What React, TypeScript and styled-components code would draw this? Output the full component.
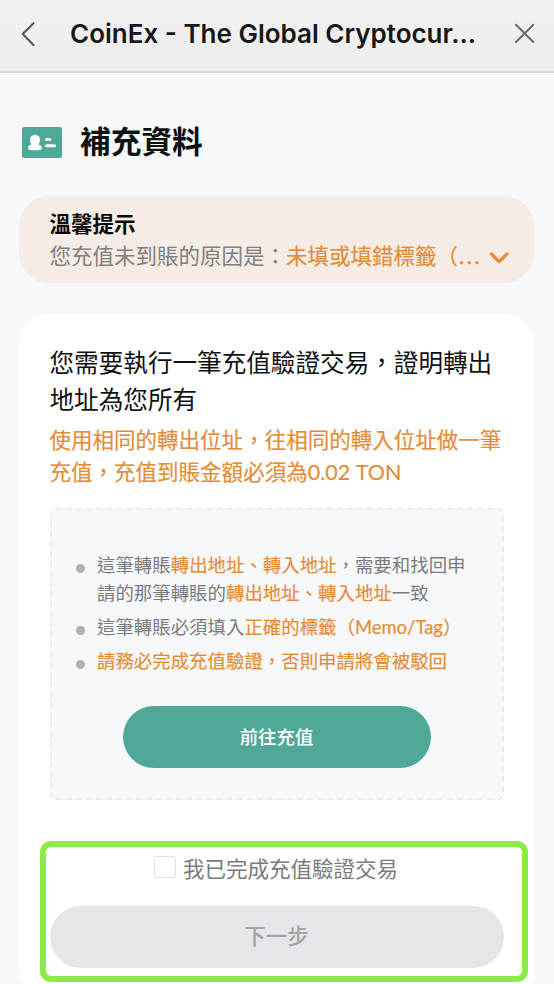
import React from "react";
import styled, { createGlobalStyle } from "styled-components";

const GlobalStyle = createGlobalStyle`
  * { box-sizing: border-box; }
  html, body { margin: 0; padding: 0; height: 984px; overflow: hidden; }
  body {
    background: #f7f8fa;
    font-family: Lato, "Noto Sans CJK TC", sans-serif;
    color: #0f1012;
  }
  h1, h2, p, ul { margin: 0; padding: 0; font-weight: 400; }
  button { border: 0; padding: 0; background: none; font-family: inherit; }
`;

const Page = styled.div`
  width: 554px;
  height: 984px;
  overflow: hidden;
  display: flex;
  flex-direction: column;
`;

const TopBar = styled.header`
  flex: none;
  height: 73px;
  padding: 0 17px 4px 19px;
  display: flex;
  align-items: center;
  background: linear-gradient(#f1f1f1, #ededec);
  border-bottom: 2px solid #d4d7d6;
`;

const BarButton = styled.button`
  display: flex;
  width: 24px;
  height: 26px;
  flex: none;
`;

const BarTitle = styled.h1`
  flex: 1;
  margin-left: 27px;
  font: 600 26px/34px Inter, sans-serif;
  color: #161718;
  white-space: nowrap;
`;

const Heading = styled.div`
  flex: none;
  display: flex;
  align-items: center;
  height: 44px;
  margin: 47px 0 0 22px;
  gap: 18px;
`;

const HeadingText = styled.h2`
  font-size: 30.7px;
  line-height: 44px;
  font-weight: 700;
`;

const Notice = styled.section`
  flex: none;
  height: 87px;
  margin: 32px 20px 0 19px;
  padding: 12px 24px 0 30.5px;
  border-radius: 30px;
  background: #f5ece5;
`;

const NoticeTitle = styled.p`
  font-size: 21.5px;
  line-height: 32px;
  font-weight: 700;
  color: #080808;
`;

const NoticeRow = styled.div`
  display: flex;
  align-items: center;
  font-size: 21.5px;
  line-height: 32px;
  white-space: nowrap;
  color: #808080;
`;

const Accent = styled.span`
  color: #e48d38;
  -webkit-text-stroke: 0.2px #e48d38;
`;

const Ellipsis = styled.span`
  margin-left: 1px;
  letter-spacing: 2.6px;
  -webkit-text-stroke: 0.5px #e48d38;
`;

const Chevron = styled.svg`
  flex: none;
  margin: 4px 0 0 auto;
`;

const Card = styled.main`
  flex: none;
  height: 686px;
  margin: 31px 20px 0 19px;
  padding: 31px 30px 0 30.5px;
  border-radius: 30px;
  background: #fff;
`;

const Lead = styled.p`
  font-size: 24.6px;
  line-height: 36.8px;
  white-space: nowrap;
`;

const Requirement = styled.p`
  margin-top: 5px;
  font-size: 21.53px;
  line-height: 32.3px;
  color: #e48d38;
  -webkit-text-stroke: 0.2px #e48d38;
  white-space: nowrap;
`;

const Panel = styled.section`
  width: 454px;
  height: 292px;
  margin-top: 20px;
  padding-top: 42px;
  border: 2px dashed #ececed;
  border-radius: 6px;
  background: #f7f8fa;
  display: flex;
  flex-direction: column;
  align-items: center;
`;

const Rules = styled.ul`
  align-self: stretch;
  list-style: none;
  display: flex;
  flex-direction: column;
  gap: 6px;
  padding-left: 24px;
`;

const Rule = styled.li`
  display: flex;
  gap: 12.5px;
  font-size: 18.43px;
  line-height: 27.8px;
  color: #7a7b7d;
  white-space: nowrap;

  &::before {
    content: "";
    flex: none;
    width: 9px;
    height: 9px;
    margin-top: 12px;
    border-radius: 50%;
    background: #afb0b2;
  }
`;

const DepositButton = styled.button`
  width: 308px;
  height: 62px;
  margin-top: 31px;
  padding-bottom: 2px;
  border-radius: 31px;
  background: #50a998;
  color: #fff;
  font-size: 18.43px;
  font-weight: 500;
`;

const Highlight = styled.section`
  width: 488px;
  height: 141px;
  margin: 41px 0 0 -9.5px;
  padding: 4px 3.5px;
  border: 6px solid #8beb48;
  border-radius: 11px;
`;

const Confirm = styled.label`
  display: flex;
  align-items: center;
  height: 32px;
  padding-left: 104.5px;
  gap: 7px;
  font-size: 21.5px;
  color: #7b7b7b;
  white-space: nowrap;
`;

const CheckBox = styled.input`
  appearance: none;
  width: 22px;
  height: 22px;
  margin: 0;
  border: 1.5px solid #e0e0e0;
  border-radius: 3px;
  background: #fff;
`;

const NextButton = styled.button`
  display: block;
  width: 454px;
  height: 62px;
  margin-top: 23px;
  padding-bottom: 5px;
  border-radius: 31px;
  background: #e5e6ea;
  color: #a2a3a7;
  font-size: 21.5px;
  font-weight: 500;
`;

export default function App() {
  return (
    <>
      <GlobalStyle />
      <Page>
        <TopBar>
          <BarButton aria-label="返回">
            <svg width="24" height="26" fill="none" stroke="#555659" strokeWidth="2.1" strokeLinecap="round" strokeLinejoin="round">
              <path d="M14.5 2.2 3.7 13l10.8 11" />
            </svg>
          </BarButton>
          <BarTitle>CoinEx - The Global Cryptocur...</BarTitle>
          <BarButton aria-label="關閉">
            <svg width="24" height="26" fill="none" stroke="#6b6b74" strokeWidth="2" strokeLinecap="round">
              <path d="m3 3.700 17.300 17.300M20.300 3.700l-17.300 17.300" />
            </svg>
          </BarButton>
        </TopBar>

        <Heading>
          <svg width="40" height="31">
            <rect width="40" height="31" rx="2" fill="#50a998" />
            <g fill="#fff">
              <ellipse cx="13" cy="13.3" rx="5" ry="5.6" />
              <path d="M10.5 16.5h5c.2 1.2 4.3 1.4 4.3 4.2 0 1.700-1.500 2.500-3.200 2.500H9.400c-1.700 0-3.200-.8-3.200-2.500 0-2.800 4.100-3 4.300-4.200Z" />
              <rect x="23" y="11" width="6.300" height="3" rx="1.500" />
              <rect x="23" y="17.200" width="11" height="3" rx="1.500" />
            </g>
          </svg>
          <HeadingText>補充資料</HeadingText>
        </Heading>

        <Notice>
          <NoticeTitle>溫馨提示</NoticeTitle>
          <NoticeRow>
            您充值未到賬的原因是：
            <Accent>
              未填或填錯標籤（<Ellipsis>...</Ellipsis>
            </Accent>
            <Chevron width="22" height="16" fill="none" stroke="#e48d38" strokeWidth="3.300" strokeLinecap="round" strokeLinejoin="round">
              <path d="m3.500 4 7.700 7.600L19 4" />
            </Chevron>
          </NoticeRow>
        </Notice>

        <Card>
          <Lead>
            您需要執行一筆充值驗證交易，證明轉出
            <br />
            地址為您所有
          </Lead>
          <Requirement>
            使用相同的轉出位址，往相同的轉入位址做一筆
            <br />
            充值，充值到賬金額必須為0.02 TON
          </Requirement>
          <Panel>
            <Rules>
              <Rule>
                <span>
                  這筆轉賬<Accent>轉出地址、轉入地址</Accent>，需要和找回申
                  <br />
                  請的那筆轉賬的<Accent>轉出地址、轉入地址</Accent>一致
                </span>
              </Rule>
              <Rule>
                <span>
                  這筆轉賬必須填入<Accent>正確的標籤（Memo/Tag）</Accent>
                </span>
              </Rule>
              <Rule>
                <Accent>請務必完成充值驗證，否則申請將會被駁回</Accent>
              </Rule>
            </Rules>
            <DepositButton>前往充值</DepositButton>
          </Panel>
          <Highlight>
            <Confirm>
              <CheckBox type="checkbox" />
              我已完成充值驗證交易
            </Confirm>
            <NextButton>下一步</NextButton>
          </Highlight>
        </Card>
      </Page>
    </>
  );
}
